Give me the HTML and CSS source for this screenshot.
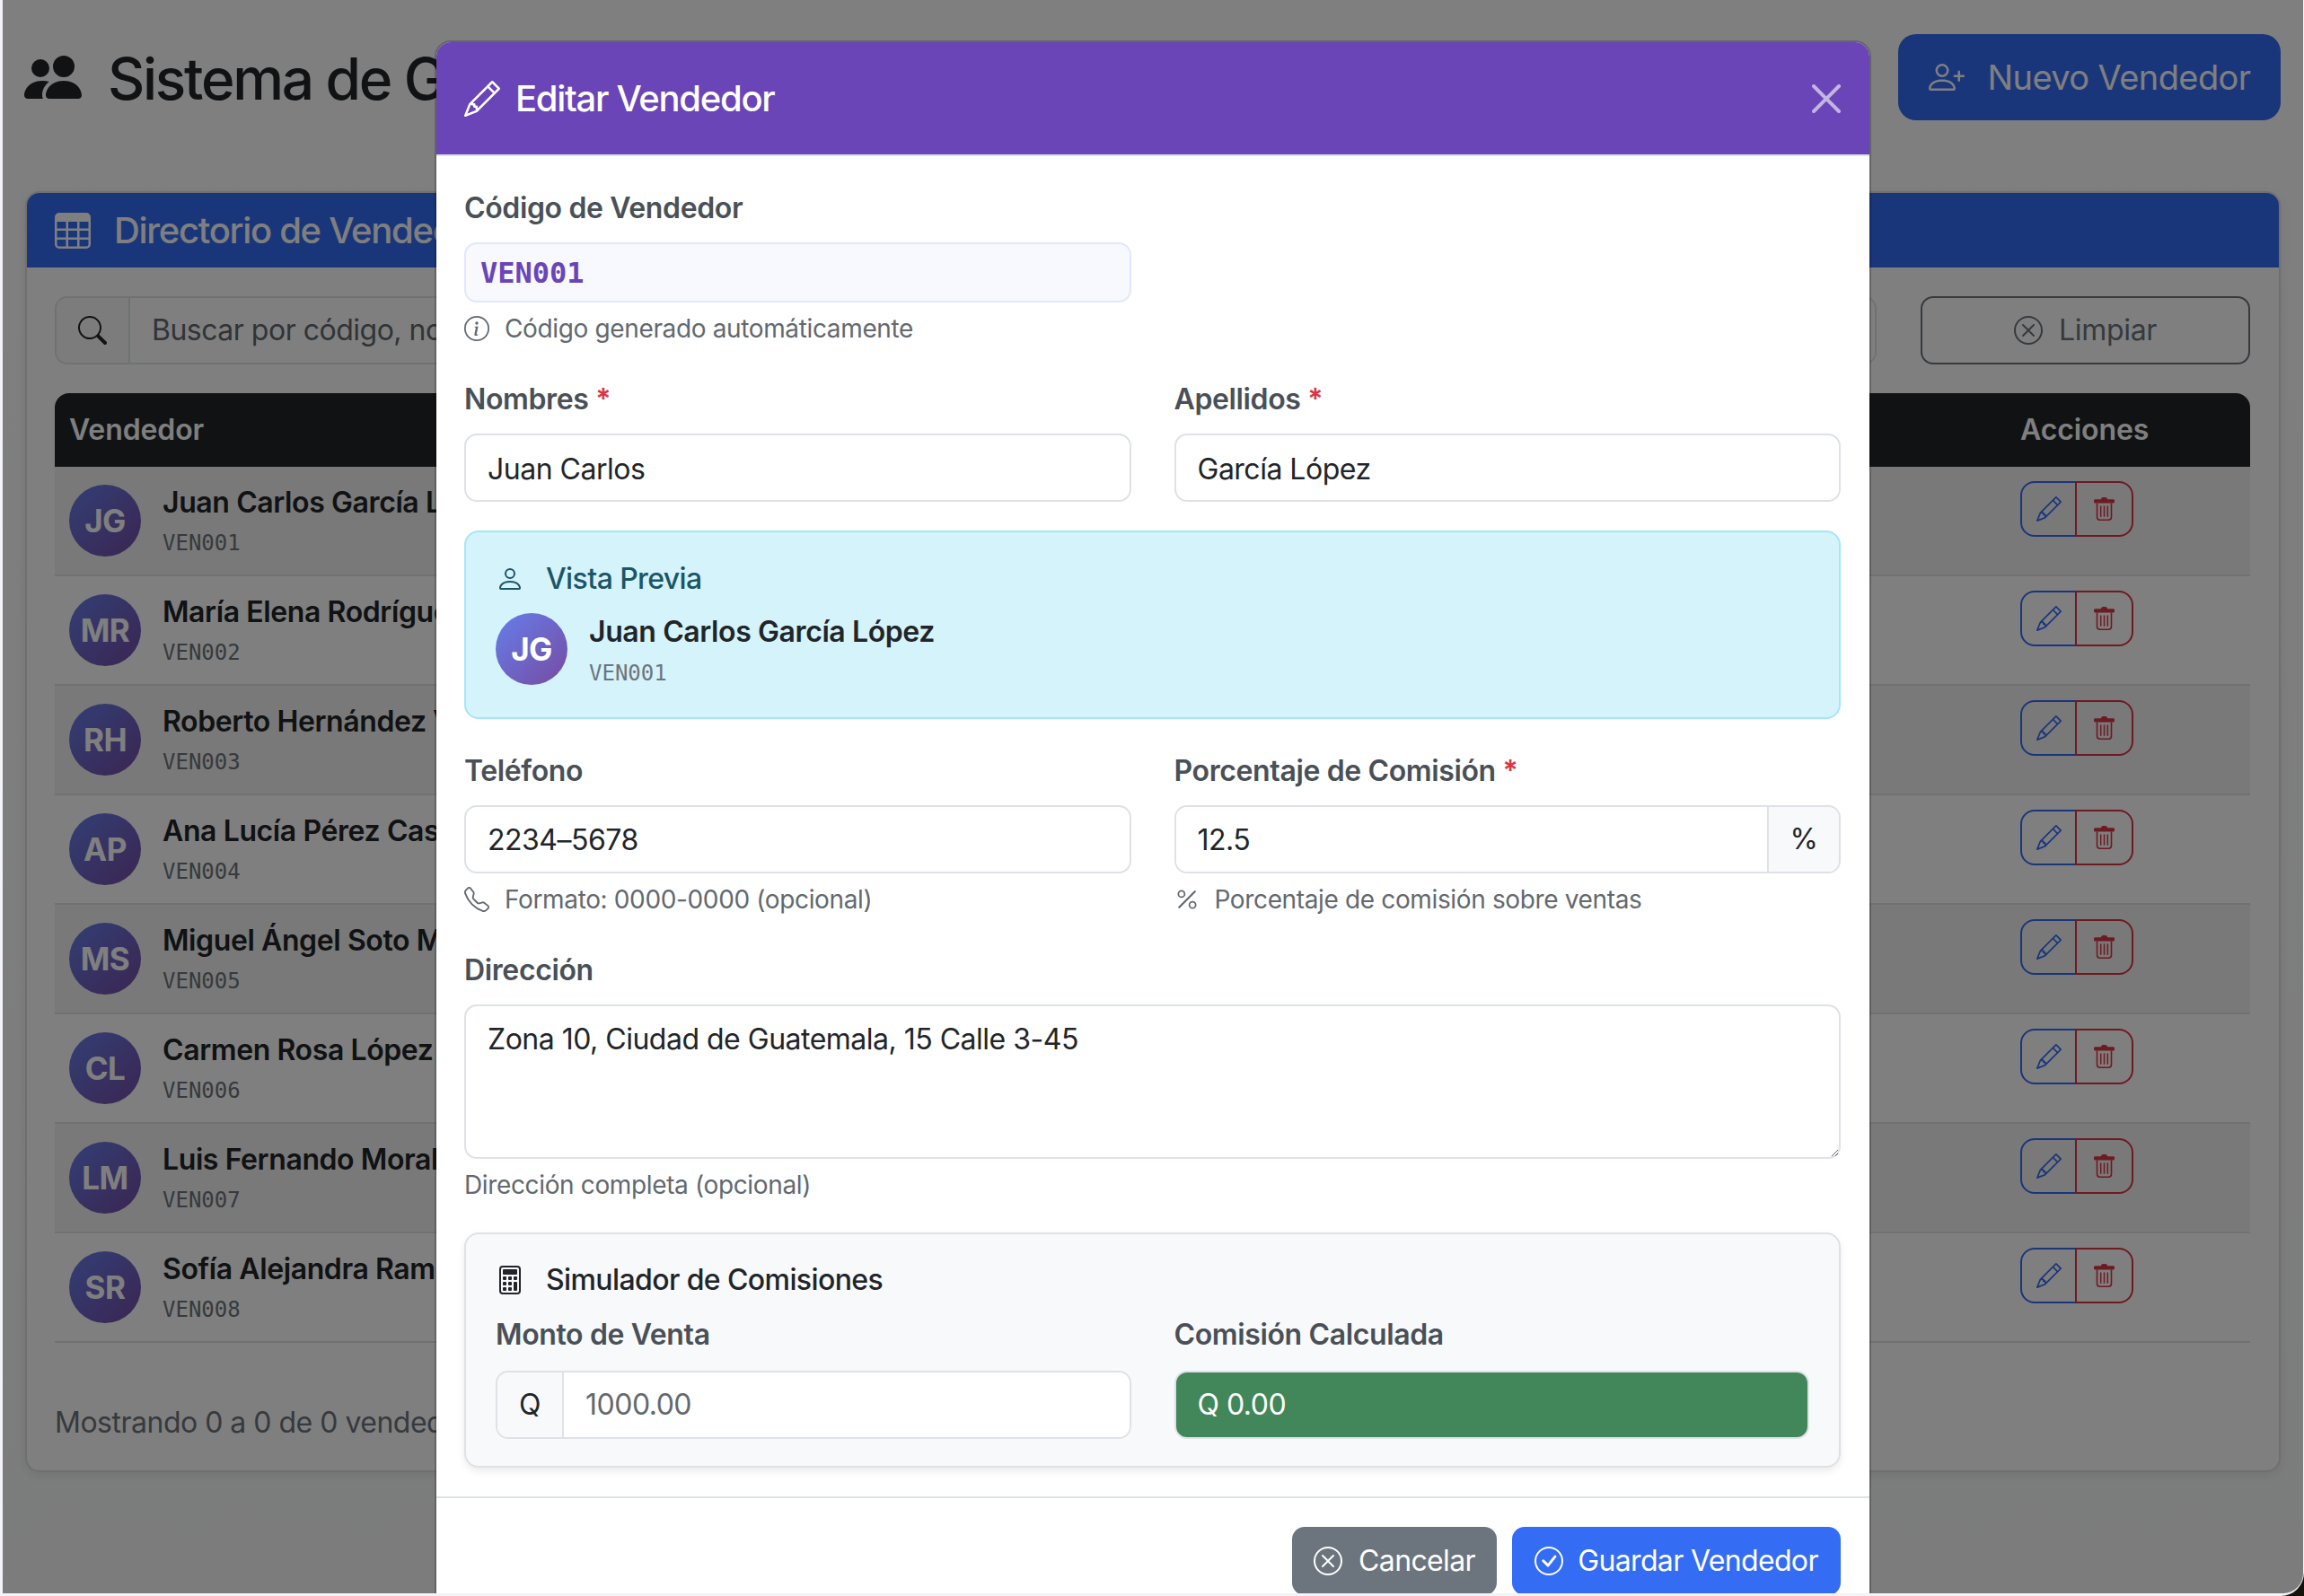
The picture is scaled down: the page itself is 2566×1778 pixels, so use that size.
FILE: index.html
```html
<!DOCTYPE html>
<html lang="es">
<head>
<meta charset="utf-8">
<title>Sistema de Gestión de Vendedores</title>
<link rel="stylesheet" href="styles.css">
</head>
<body>
<svg class="defs" width="0" height="0" aria-hidden="true">
  <symbol id="i-people" viewBox="0 0 16 16"><path d="M7 14s-1 0-1-1 1-4 5-4 5 3 5 4-1 1-1 1H7Zm4-6a3 3 0 1 0 0-6 3 3 0 0 0 0 6Zm-5.784 6A2.238 2.238 0 0 1 5 13c0-1.355.68-2.75 1.936-3.72A6.325 6.325 0 0 0 5 9c-4 0-5 3-5 4s1 1 1 1h4.216ZM4.5 8a2.5 2.5 0 1 0 0-5 2.5 2.5 0 0 0 0 5Z"/></symbol>
  <symbol id="i-person-plus" viewBox="0 0 16 16"><path d="M6 8a3 3 0 1 0 0-6 3 3 0 0 0 0 6zm2-3a2 2 0 1 1-4 0 2 2 0 0 1 4 0zm4 8c0 1-1 1-1 1H1s-1 0-1-1 1-4 6-4 6 3 6 4zm-1-.004c-.001-.246-.154-.986-.832-1.664C9.516 10.68 8.289 10 6 10c-2.29 0-3.516.68-4.168 1.332-.678.678-.83 1.418-.832 1.664h10z"/><path d="M13.5 5a.5.5 0 0 1 .5.5V7h1.5a.5.5 0 0 1 0 1H14v1.5a.5.5 0 0 1-1 0V8h-1.5a.5.5 0 0 1 0-1H13V5.5a.5.5 0 0 1 .5-.5z"/></symbol>
  <symbol id="i-table" viewBox="0 0 16 16"><path d="M0 2a2 2 0 0 1 2-2h12a2 2 0 0 1 2 2v12a2 2 0 0 1-2 2H2a2 2 0 0 1-2-2V2zm15 2h-4v3h4V4zm0 4h-4v3h4V8zm0 4h-4v3h3a1 1 0 0 0 1-1v-2zm-5 3v-3H6v3h4zm-5 0v-3H1v2a1 1 0 0 0 1 1h3zm-4-4h4V8H1v3zm0-4h4V4H1v3zm5-3v3h4V4H6zm4 4H6v3h4V8z"/></symbol>
  <symbol id="i-search" viewBox="0 0 16 16"><path d="M11.742 10.344a6.5 6.5 0 1 0-1.397 1.398h-.001c.03.04.062.078.098.115l3.85 3.85a1 1 0 0 0 1.415-1.414l-3.85-3.85a1.007 1.007 0 0 0-.115-.1zM12 6.5a5.5 5.5 0 1 1-11 0 5.5 5.5 0 0 1 11 0z"/></symbol>
  <symbol id="i-x-circle" viewBox="0 0 16 16"><path d="M8 15A7 7 0 1 1 8 1a7 7 0 0 1 0 14zm0 1A8 8 0 1 0 8 0a8 8 0 0 0 0 16z"/><path d="M4.646 4.646a.5.5 0 0 1 .708 0L8 7.293l2.646-2.647a.5.5 0 0 1 .708.708L8.707 8l2.647 2.646a.5.5 0 0 1-.708.708L8 8.707l-2.646 2.647a.5.5 0 0 1-.708-.708L7.293 8 4.646 5.354a.5.5 0 0 1 0-.708z"/></symbol>
  <symbol id="i-check-circle" viewBox="0 0 16 16"><path d="M8 15A7 7 0 1 1 8 1a7 7 0 0 1 0 14zm0 1A8 8 0 1 0 8 0a8 8 0 0 0 0 16z"/><path d="M10.97 4.97a.235.235 0 0 0-.02.022L7.477 9.417 5.384 7.323a.75.75 0 0 0-1.06 1.06L6.97 11.03a.75.75 0 0 0 1.079-.02l3.992-4.99a.75.75 0 0 0-1.071-1.05z"/></symbol>
  <symbol id="i-info" viewBox="0 0 16 16"><path d="M8 15A7 7 0 1 1 8 1a7 7 0 0 1 0 14zm0 1A8 8 0 1 0 8 0a8 8 0 0 0 0 16z"/><path d="m8.93 6.588-2.29.287-.082.38.45.083c.294.07.352.176.288.469l-.738 3.468c-.194.897.105 1.319.808 1.319.545 0 1.178-.252 1.465-.598l.088-.416c-.2.176-.492.246-.686.246-.275 0-.375-.193-.304-.533L8.93 6.588zM9 4.5a1 1 0 1 1-2 0 1 1 0 0 1 2 0z"/></symbol>
  <symbol id="i-pencil" viewBox="0 0 16 16"><path d="M12.146.146a.5.5 0 0 1 .708 0l3 3a.5.5 0 0 1 0 .708l-10 10a.5.5 0 0 1-.168.11l-5 2a.5.5 0 0 1-.65-.65l2-5a.5.5 0 0 1 .11-.168l10-10zM11.207 2.5 13.5 4.793 14.793 3.5 12.5 1.207 11.207 2.5zm1.586 3L10.5 3.207 4 9.707V10h.5a.5.5 0 0 1 .5.5v.5h.5a.5.5 0 0 1 .5.5v.5h.293l6.5-6.5zm-9.761 5.175-.106.106-1.528 3.821 3.821-1.528.106-.106A.5.5 0 0 1 5 12.5V12h-.5a.5.5 0 0 1-.5-.5V11h-.5a.5.5 0 0 1-.468-.325z"/></symbol>
  <symbol id="i-trash" viewBox="0 0 23 26"><path d="M8 2.2c0-1.200 1-2.200 2-2.200h3c1 0 2 1 2 2.200h6.500c.9 0 1.500.6 1.500 1.500v1.300c0 .9-.6 1.500-1.500 1.500h-20c-.9 0-1.500-.6-1.500-1.500V3.700c0-.9.6-1.500 1.500-1.500z"/><path d="M3.500 6.500V22c0 2 1.500 3.200 3.200 3.200h9.600c1.700 0 3.200-1.200 3.200-3.200V6.500" fill="none" stroke="currentColor" stroke-width="1.600"/><path d="M7.700 9.500v12.200M11.500 9.500v12.200M15.300 9.500v12.200" fill="none" stroke="currentColor" stroke-width="1.500"/></symbol>
  <symbol id="i-person" viewBox="0 0 16 16"><path d="M8 8a3 3 0 1 0 0-6 3 3 0 0 0 0 6Zm2-3a2 2 0 1 1-4 0 2 2 0 0 1 4 0Zm4 8c0 1-1 1-1 1H3s-1 0-1-1 1-4 6-4 6 3 6 4Zm-1-.004c-.001-.246-.154-.986-.832-1.664C11.516 10.68 10.289 10 8 10c-2.290 0-3.516.68-4.168 1.332-.678.678-.83 1.418-.832 1.664h10Z"/></symbol>
  <symbol id="i-phone" viewBox="0 0 16 16"><path d="M3.654 1.328a.678.678 0 0 0-1.015-.063L1.605 2.300c-.483.484-.661 1.169-.45 1.770a17.568 17.568 0 0 0 4.168 6.608 17.569 17.569 0 0 0 6.608 4.168c.601.211 1.286.033 1.770-.45l1.034-1.034a.678.678 0 0 0-.063-1.015l-2.307-1.794a.678.678 0 0 0-.58-.122l-2.190.547a1.745 1.745 0 0 1-1.657-.459L5.482 8.062a1.745 1.745 0 0 1-.46-1.657l.548-2.190a.678.678 0 0 0-.122-.58L3.654 1.328zM1.884.511a1.745 1.745 0 0 1 2.612.163L6.290 2.980c.329.423.445.974.315 1.494l-.547 2.190a.678.678 0 0 0 .178.643l2.457 2.457a.678.678 0 0 0 .644.178l2.189-.547a1.745 1.745 0 0 1 1.494.315l2.306 1.794c.829.645.905 1.870.163 2.611l-1.034 1.034c-.74.74-1.846 1.065-2.877.702a18.634 18.634 0 0 1-7.010-4.420 18.634 18.634 0 0 1-4.420-7.009c-.362-1.030-.037-2.137.703-2.877L1.885.511z"/></symbol>
  <symbol id="i-percent" viewBox="0 0 16 16"><path d="M13.442 2.558a.625.625 0 0 1 0 .884l-10 10a.625.625 0 1 1-.884-.884l10-10a.625.625 0 0 1 .884 0zM4.500 6a1.500 1.500 0 1 1 0-3 1.500 1.500 0 0 1 0 3zm0 1a2.500 2.500 0 1 0 0-5 2.500 2.500 0 0 0 0 5zm7 6a1.500 1.500 0 1 1 0-3 1.500 1.500 0 0 1 0 3zm0 1a2.500 2.500 0 1 0 0-5 2.500 2.500 0 0 0 0 5z"/></symbol>
  <symbol id="i-calc" viewBox="0 0 16 16"><path d="M12 1a1 1 0 0 1 1 1v12a1 1 0 0 1-1 1H4a1 1 0 0 1-1-1V2a1 1 0 0 1 1-1h8zM4 0a2 2 0 0 0-2 2v12a2 2 0 0 0 2 2h8a2 2 0 0 0 2-2V2a2 2 0 0 0-2-2H4z"/><path d="M4 2.500a.5.5 0 0 1 .5-.5h7a.5.5 0 0 1 .5.5v2a.5.5 0 0 1-.5.5h-7a.5.5 0 0 1-.5-.5v-2zm0 4a.5.5 0 0 1 .5-.5h1a.5.5 0 0 1 .5.5v1a.5.5 0 0 1-.5.5h-1a.5.5 0 0 1-.5-.5v-1zm0 3a.5.5 0 0 1 .5-.5h1a.5.5 0 0 1 .5.5v1a.5.5 0 0 1-.5.5h-1a.5.5 0 0 1-.5-.5v-1zm0 3a.5.5 0 0 1 .5-.5h1a.5.5 0 0 1 .5.5v1a.5.5 0 0 1-.5.5h-1a.5.5 0 0 1-.5-.5v-1zm3-6a.5.5 0 0 1 .5-.5h1a.5.5 0 0 1 .5.5v1a.5.5 0 0 1-.5.5h-1a.5.5 0 0 1-.5-.5v-1zm0 3a.5.5 0 0 1 .5-.5h1a.5.5 0 0 1 .5.5v1a.5.5 0 0 1-.5.5h-1a.5.5 0 0 1-.5-.5v-1zm0 3a.5.5 0 0 1 .5-.5h1a.5.5 0 0 1 .5.5v1a.5.5 0 0 1-.5.5h-1a.5.5 0 0 1-.5-.5v-1zm3-6a.5.5 0 0 1 .5-.5h1a.5.5 0 0 1 .5.5v1a.5.5 0 0 1-.5.5h-1a.5.5 0 0 1-.5-.5v-1zm0 3a.5.5 0 0 1 .5-.5h1a.5.5 0 0 1 .5.5v4a.5.5 0 0 1-.5.5h-1a.5.5 0 0 1-.5-.5v-4z"/></symbol>
  <symbol id="i-close" viewBox="0 0 16 16"><path d="M.293.293a1 1 0 0 1 1.414 0L8 6.586 14.293.293a1 1 0 1 1 1.414 1.414L9.414 8l6.293 6.293a1 1 0 0 1-1.414 1.414L8 9.414l-6.293 6.293a1 1 0 0 1-1.414-1.414L6.586 8 .293 1.707a1 1 0 0 1 0-1.414z"/></symbol>
</svg>

<div class="window">
<div class="page">
  <header class="topbar">
    <h1 class="page-title"><svg class="ic ic-title"><use href="#i-people"/></svg><span class="page-title-text">Sistema de Gestión de Vendedores</span></h1>
    <button class="btn btn-new"><svg class="ic ic-new"><use href="#i-person-plus"/></svg>Nuevo Vendedor</button>
  </header>

  <section class="card">
    <div class="card-head"><svg class="ic ic-h"><use href="#i-table"/></svg><h2 class="card-title">Directorio de Vendedores</h2></div>
    <div class="card-body">
      <div class="filters">
        <div class="group search">
          <span class="addon addon-search"><svg class="ic ic-32"><use href="#i-search"/></svg></span>
          <input class="group-input group-input-plain" placeholder="Buscar por código, nombre o teléfono...">
        </div>
        <button class="btn btn-clear"><svg class="ic ic-32"><use href="#i-x-circle"/></svg>Limpiar</button>
      </div>
      <table class="table">
        <thead><tr><th>Vendedor</th><th class="col-actions">Acciones</th></tr></thead>
        <tbody>
          <tr><td><div class="person"><span class="avatar">JG</span><div><div class="name">Juan Carlos García López</div><div class="code">VEN001</div></div></div></td>
            <td><div class="actions"><button class="act act-edit"><svg class="ic ic-act"><use href="#i-pencil"/></svg></button><button class="act act-del"><svg class="ic ic-trash"><use href="#i-trash"/></svg></button></div></td></tr>
          <tr><td><div class="person"><span class="avatar">MR</span><div><div class="name">María Elena Rodríguez Martínez</div><div class="code">VEN002</div></div></div></td>
            <td><div class="actions"><button class="act act-edit"><svg class="ic ic-act"><use href="#i-pencil"/></svg></button><button class="act act-del"><svg class="ic ic-trash"><use href="#i-trash"/></svg></button></div></td></tr>
          <tr><td><div class="person"><span class="avatar">RH</span><div><div class="name">Roberto Hernández Vega</div><div class="code">VEN003</div></div></div></td>
            <td><div class="actions"><button class="act act-edit"><svg class="ic ic-act"><use href="#i-pencil"/></svg></button><button class="act act-del"><svg class="ic ic-trash"><use href="#i-trash"/></svg></button></div></td></tr>
          <tr><td><div class="person"><span class="avatar">AP</span><div><div class="name">Ana Lucía Pérez Castro</div><div class="code">VEN004</div></div></div></td>
            <td><div class="actions"><button class="act act-edit"><svg class="ic ic-act"><use href="#i-pencil"/></svg></button><button class="act act-del"><svg class="ic ic-trash"><use href="#i-trash"/></svg></button></div></td></tr>
          <tr><td><div class="person"><span class="avatar">MS</span><div><div class="name">Miguel Ángel Soto Morales</div><div class="code">VEN005</div></div></div></td>
            <td><div class="actions"><button class="act act-edit"><svg class="ic ic-act"><use href="#i-pencil"/></svg></button><button class="act act-del"><svg class="ic ic-trash"><use href="#i-trash"/></svg></button></div></td></tr>
          <tr><td><div class="person"><span class="avatar">CL</span><div><div class="name">Carmen Rosa López Díaz</div><div class="code">VEN006</div></div></div></td>
            <td><div class="actions"><button class="act act-edit"><svg class="ic ic-act"><use href="#i-pencil"/></svg></button><button class="act act-del"><svg class="ic ic-trash"><use href="#i-trash"/></svg></button></div></td></tr>
          <tr><td><div class="person"><span class="avatar">LM</span><div><div class="name">Luis Fernando Morales Ruiz</div><div class="code">VEN007</div></div></div></td>
            <td><div class="actions"><button class="act act-edit"><svg class="ic ic-act"><use href="#i-pencil"/></svg></button><button class="act act-del"><svg class="ic ic-trash"><use href="#i-trash"/></svg></button></div></td></tr>
          <tr><td><div class="person"><span class="avatar">SR</span><div><div class="name">Sofía Alejandra Ramírez Flores</div><div class="code">VEN008</div></div></div></td>
            <td><div class="actions"><button class="act act-edit"><svg class="ic ic-act"><use href="#i-pencil"/></svg></button><button class="act act-del"><svg class="ic ic-trash"><use href="#i-trash"/></svg></button></div></td></tr>
        </tbody>
      </table>
      <p class="summary">Mostrando 0 a 0 de 0 vendedores</p>
    </div>
  </section>

  <div class="backdrop"></div>

  <div class="modal">
    <div class="modal-head">
      <svg class="ic ic-h"><use href="#i-pencil"/></svg>
      <h3 class="modal-title">Editar Vendedor</h3>
      <svg class="ic ic-close"><use href="#i-close"/></svg>
    </div>
    <div class="modal-body">
      <div class="grid">
        <div>
          <label class="label">Código de Vendedor</label>
          <input class="control control-code" value="VEN001">
          <div class="help"><svg class="ic ic-28"><use href="#i-info"/></svg>Código generado automáticamente</div>
        </div>
      </div>
      <div class="grid sec">
        <div>
          <label class="label">Nombres <span class="req">*</span></label>
          <input class="control" value="Juan Carlos">
        </div>
        <div>
          <label class="label">Apellidos <span class="req">*</span></label>
          <input class="control" value="García López">
        </div>
      </div>
      <div class="preview sec">
        <div class="box-title box-title-info"><svg class="ic ic-box"><use href="#i-person"/></svg>Vista Previa</div>
        <div class="person person-preview"><span class="avatar">JG</span><div><div class="name name-preview">Juan Carlos García López</div><div class="code code-preview">VEN001</div></div></div>
      </div>
      <div class="grid sec">
        <div>
          <label class="label">Teléfono</label>
          <input class="control control-flat" value="2234–5678">
          <div class="help"><svg class="ic ic-28"><use href="#i-phone"/></svg>Formato: 0000-0000 (opcional)</div>
        </div>
        <div>
          <label class="label">Porcentaje de Comisión <span class="req">*</span></label>
          <div class="group"><input class="group-input" value="12.5"><span class="addon addon-pct">%</span></div>
          <div class="help"><svg class="ic ic-28"><use href="#i-percent"/></svg>Porcentaje de comisión sobre ventas</div>
        </div>
      </div>
      <div class="sec">
        <label class="label">Dirección</label>
        <textarea class="control control-area">Zona 10, Ciudad de Guatemala, 15 Calle 3-45</textarea>
        <div class="help">Dirección completa (opcional)</div>
      </div>
      <div class="sim sec">
        <div class="box-title"><svg class="ic ic-box"><use href="#i-calc"/></svg>Simulador de Comisiones</div>
        <div class="grid grid-sim">
          <div>
            <label class="label">Monto de Venta</label>
            <div class="group"><span class="addon addon-q">Q</span><input class="group-input group-input-plain" placeholder="1000.00"></div>
          </div>
          <div>
            <label class="label">Comisión Calculada</label>
            <div class="result">Q 0.00</div>
          </div>
        </div>
      </div>
    </div>
    <div class="modal-foot">
      <button class="btn btn-cancel"><svg class="ic ic-32"><use href="#i-x-circle"/></svg>Cancelar</button>
      <button class="btn btn-save"><svg class="ic ic-32"><use href="#i-check-circle"/></svg>Guardar Vendedor</button>
    </div>
  </div>
</div>
</div>
</body>
</html>
```
FILE: styles.css
```css
* { box-sizing: border-box; }
html, body { margin: 0; padding: 0; }
body {
  width: 2566px;
  height: 1778px;
  overflow: hidden;
  background: #15120c;
  font-family: Inter, "Liberation Sans", sans-serif;
  font-size: 32px;
  line-height: 48px;
  letter-spacing: -.5px;
  color: #212529;
}
.defs { position: absolute; }
.ic { fill: currentColor; flex: none; display: block; }
.ic-title { width: 64px; height: 64px; }
.ic-new { width: 40px; height: 40px; }
.ic-h { width: 40px; height: 40px; }
.ic-32 { width: 32px; height: 32px; }
.ic-28 { width: 28px; height: 28px; }
.ic-box { width: 32px; height: 32px; }
.ic-act { width: 28px; height: 28px; }
.ic-trash { width: 23px; height: 26px; }
.ic-close { width: 32px; height: 32px; margin-left: auto; color: #fff; opacity: .6; }

.window {
  width: 2566px;
  height: 1778px;
  padding: 0 1px 3px 3px;
  background: #f3f3f8;
  border-bottom-right-radius: 26px;
  overflow: hidden;
}
.page {
  position: relative;
  height: 100%;
  padding: 38px 25px 0;
  overflow: hidden;
  background: linear-gradient(#ffffff, #f8f9fa);
  border-bottom-right-radius: 22px;
}
.backdrop {
  position: absolute;
  inset: 0;
  background: rgba(0, 0, 0, .5);
}

.topbar {
  display: flex;
  justify-content: space-between;
  align-items: center;
  height: 96px;
  margin-bottom: 79px;
}
.page-title {
  display: flex;
  align-items: center;
  gap: 29px;
  margin: 0 0 0 -1px;
  font-size: 64px;
  line-height: 76px;
  font-weight: 500;
  letter-spacing: -2.3px;
}
.page-title-text { padding-top: 3px; }

.btn {
  display: inline-flex;
  align-items: center;
  justify-content: center;
  border: 2px solid transparent;
  font: inherit;
  letter-spacing: -.65px;
  color: #fff;
  border-radius: 12px;
}
.btn-new {
  width: 426px;
  height: 96px;
  gap: 26px;
  font-size: 38px;
  letter-spacing: -.6px;
  border-radius: 20px;
  background: #346cf4;
}
.btn-clear {
  width: 367px;
  height: 76px;
  gap: 18px;
  letter-spacing: -.3px;
  background: transparent;
  border-color: #6c757d;
  color: #6c757d;
  border-radius: 14px;
}
.btn-cancel { width: 228px; height: 76px; gap: 18px; background: #6c757d; border-radius: 14px; }
.btn-save { width: 366px; height: 76px; gap: 16px; background: #346cf4; border-radius: 14px; }

.card {
  background: #fff;
  border: 2px solid rgba(0, 0, 0, .125);
  border-radius: 16px;
  overflow: hidden;
  box-shadow: 0 4px 12px rgba(0, 0, 0, .08);
}
.card-head {
  display: flex;
  align-items: center;
  gap: 26px;
  height: 83px;
  padding-left: 31px;
  background: #346cf4;
  color: #fff;
}
.card-title { margin: 0; font-size: 40px; line-height: 48px; font-weight: 500; letter-spacing: -1.3px; }
.card-body { padding: 32px 32px 29px 31px; }
.filters { display: flex; gap: 49px; margin-bottom: 32px; }
.search { flex: 1; }

.group {
  display: flex;
  height: 76px;
  border: 2px solid #dee2e6;
  border-radius: 14px;
  overflow: hidden;
  background: #fff;
}
.addon {
  display: flex;
  align-items: center;
  justify-content: center;
  flex: none;
  background: #f8f9fa;
  color: #212529;
}
.addon-search { width: 82px; border-right: 2px solid #dee2e6; }
.addon-pct { width: 80px; border-left: 2px solid #dee2e6; }
.addon-q { width: 74px; border-right: 2px solid #dee2e6; }
.group-input {
  flex: 1;
  min-width: 0;
  border: 0;
  outline: 0;
  padding: 2px 24px 0;
  font: inherit;
  letter-spacing: inherit;
  color: #212529;
  background: #fff;
}
.group-input-plain { padding-top: 0; }
.group-input::placeholder { color: #62696f; opacity: 1; }

.table { width: 100%; border-collapse: separate; border-spacing: 0; }
.table th {
  height: 82px;
  padding: 0 16px;
  text-align: left;
  font-weight: 600;
  letter-spacing: -.1px;
  background: #212529;
  color: #fff;
}
.table th:first-child { border-top-left-radius: 16px; }
.table th:last-child { border-top-right-radius: 16px; }
.table .col-actions { width: 272px; }
.table td { height: 122px; padding: 0 16px; border-bottom: 2px solid #dee2e6; }
.table td:last-child { vertical-align: top; padding-top: 16px; }
.table tbody tr:nth-child(odd) td { background: rgba(0, 0, 0, .05); }

.person { display: flex; align-items: center; gap: 24px; }
.avatar {
  display: flex;
  align-items: center;
  justify-content: center;
  flex: none;
  width: 80px;
  height: 80px;
  border-radius: 50%;
  background: linear-gradient(135deg, #667eea, #764ba2);
  color: #fff;
  font-size: 35px;
  font-weight: 700;
}
.name { font-weight: 600; line-height: 46px; letter-spacing: -.4px; white-space: nowrap; }
.code {
  margin-top: 4px;
  font-family: "DejaVu Sans Mono", "Liberation Mono", monospace;
  font-size: 24px;
  line-height: 36px;
  letter-spacing: 0;
  color: #6c757d;
}
.actions { display: flex; width: 126px; }
.act {
  display: flex;
  align-items: center;
  justify-content: center;
  width: 63px;
  height: 62px;
  padding: 0;
  background: transparent;
  border: 2px solid;
}
.act-edit { color: #346cf4; border-color: #346cf4; border-radius: 16px 0 0 16px; }
.act-del { color: #dc3545; border-color: #dc3545; border-radius: 0 16px 16px 0; margin-left: -2px; width: 65px; }
.summary { margin: 65px 0 0; color: #6c757d; }

.modal {
  position: absolute;
  left: 481px;
  top: 45px;
  width: 1600px;
  height: 1800px;
  background: #fff;
  background-clip: padding-box;
  border: 2px solid rgba(0, 0, 0, .2);
  border-radius: 18px;
}
.modal-head {
  display: flex;
  align-items: center;
  height: 127px;
  padding: 0 32px 0 31px;
  background: #6a45b8;
  color: #fff;
  border-bottom: 2px solid #dee2e6;
  border-radius: 16px 16px 0 0;
}
.modal-title { margin: 0 0 0 17px; font-size: 40px; line-height: 48px; font-weight: 500; letter-spacing: -1.3px; }
.modal-body { padding: 32px 32px 32px 31px; }
.grid { display: grid; grid-template-columns: 1fr 1fr; gap: 48px; }
.sec { margin-top: 32px; }
.label { display: block; margin-bottom: 14px; padding-top: 2px; font-weight: 600; letter-spacing: -.37px; color: #495057; }
.req { color: #dc3545; }
.control {
  display: block;
  width: 100%;
  height: 76px;
  padding: 2px 24px 0;
  border: 2px solid #dee2e6;
  border-radius: 14px;
  outline: 0;
  font: inherit;
  letter-spacing: inherit;
  color: #212529;
  background: #fff;
}
.control-flat { padding-top: 0; }
.control-code {
  height: 67px;
  padding: 0 16px;
  background: #f8f9ff;
  border-color: #e0e7ff;
  font-family: "DejaVu Sans Mono", "Liberation Mono", monospace;
  font-weight: 700;
  letter-spacing: 0;
  color: #6a45b8;
}
.control-area { height: 172px; padding: 13px 24px; resize: vertical; }
.help {
  display: flex;
  align-items: center;
  gap: 17px;
  margin-top: 8px;
  font-size: 28px;
  line-height: 42px;
  letter-spacing: -.36px;
  color: #62696f;
}
.preview {
  height: 210px;
  padding: 28px 33px 0;
  background: #d4f3fb;
  border: 2px solid #a5e6f6;
  border-radius: 16px;
}
.box-title { display: flex; align-items: center; gap: 24px; font-weight: 500; letter-spacing: -.6px; }
.box-title-info { color: #1b5566; }
.person-preview { margin-top: 14px; align-items: flex-start; }
.name-preview { line-height: 42px; }
.code-preview { margin-top: 0; line-height: 50px; }
.sim {
  height: 262px;
  padding: 27px 33px 0;
  background: #f8f9fa;
  border: 2px solid #dee2e6;
  border-radius: 16px;
  box-shadow: 0 4px 8px rgba(0, 0, 0, .08);
}
.grid-sim { margin-top: 13px; }
.grid-sim .label { margin-bottom: 16px; padding-top: 0; }
.result {
  height: 76px;
  padding: 0 24px;
  display: flex;
  align-items: center;
  border: 2px solid #dee2e6;
  border-radius: 14px;
  background: #428759;
  color: #fff;
}
.modal-foot {
  display: flex;
  justify-content: flex-end;
  gap: 17px;
  padding: 32px 32px 0;
  border-top: 2px solid #dee2e6;
}
```
